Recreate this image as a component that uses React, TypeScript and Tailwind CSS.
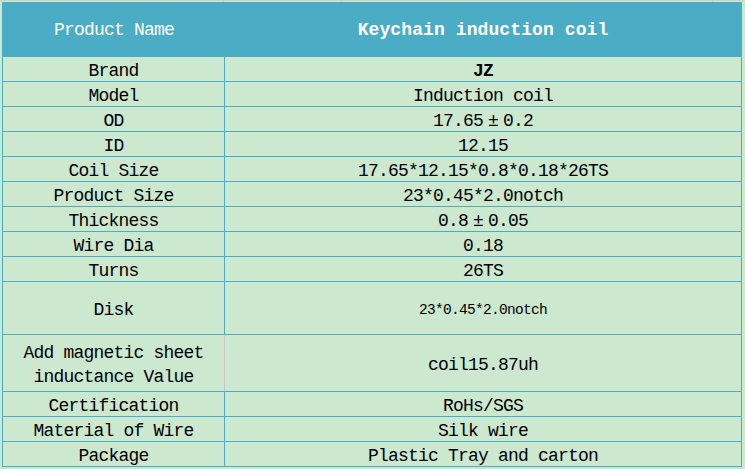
import React from 'react';

type Spec = { label: React.ReactNode; value: React.ReactNode; h: string; small?: boolean; grayDivider?: boolean; bold?: boolean };

const PlusMinus = () => <span className="inline-block w-[20px] text-center">±</span>;

const rows: Spec[] = [
    { label: 'Brand', value: 'JZ', h: 'h-[25px]', bold: true },
    { label: 'Model', value: 'Induction coil', h: 'h-[25px]' },
    { label: 'OD', value: <>17.65<PlusMinus />0.2</>, h: 'h-[25px]' },
    { label: 'ID', value: '12.15', h: 'h-[25px]' },
    { label: 'Coil Size', value: '17.65*12.15*0.8*0.18*26TS', h: 'h-[25px]' },
    { label: 'Product Size', value: '23*0.45*2.0notch', h: 'h-[25px]' },
    { label: 'Thickness', value: <>0.8<PlusMinus />0.05</>, h: 'h-[25px]' },
    { label: 'Wire Dia', value: '0.18', h: 'h-[25px]' },
    { label: 'Turns', value: '26TS', h: 'h-[25px]' },
    { label: 'Disk', value: '23*0.45*2.0notch', h: 'h-[53px]', small: true },
    {
        label: <>Add magnetic sheet<br />inductance Value</>,
        value: 'coil15.87uh',
        h: 'h-[57px]',
        grayDivider: true,
    },
    { label: 'Certification', value: 'RoHs/SGS', h: 'h-[25px]' },
    { label: 'Material of Wire', value: 'Silk wire', h: 'h-[25px]' },
    { label: 'Package', value: 'Plastic Tray and carton', h: 'h-[25px]' },
];

const mono = "font-['Liberation_Mono',monospace]";

export default function App() {
    return (
        <div className={`w-[745px] h-[469px] overflow-hidden bg-[#cce8cf] text-black ${mono}`}>
            {/* excel gridline strip above the table */}
            <div className="flex h-[2px] border-t border-[#c9d6ca]">
                <div className="w-[224px] border-r border-[#c0c8c0]" />
                <div className="w-[118px] border-r border-[#c0c8c0]" />
                <div className="w-[371px] border-r border-[#c0c8c0]" />
            </div>

            <div className="ml-[2px] w-[740px] border-x border-[#4bacc6]">
                {/* header */}
                <div className="flex h-[55px] pt-[3px] bg-[#4bacc6] border-b border-[#4bacc6] text-white">
                    <div className="w-[222px] flex items-center justify-center text-[18px] tracking-[-0.8px]">
                        Product Name
                    </div>
                    <div className="flex-1 flex items-center justify-center text-[18px] font-bold tracking-[0.1px]">
                        Keychain induction coil
                    </div>
                </div>

                {rows.map((r, i) => (
                    <div key={i} className={`flex ${r.h} border-b border-[#4bacc6]`}>
                        <div
                            className={`w-[222px] shrink-0 flex items-center justify-center pt-[3px] text-center border-r ${r.grayDivider ? 'border-[#c8c8c8]' : 'border-[#4bacc6]'} text-[18px] tracking-[-0.8px] leading-[24px]`}
                        >
                            <span>{r.label}</span>
                        </div>
                        <div
                            className={`flex-1 flex items-center justify-center pt-[3px] leading-[24px] whitespace-nowrap ${r.small ? 'text-[14.5px] tracking-[-0.7px]' : 'text-[18px] tracking-[-0.8px]'} ${r.bold ? 'font-bold' : ''}`}
                        >
                            <span>{r.value}</span>
                        </div>
                    </div>
                ))}
            </div>
        </div>
    );
}
